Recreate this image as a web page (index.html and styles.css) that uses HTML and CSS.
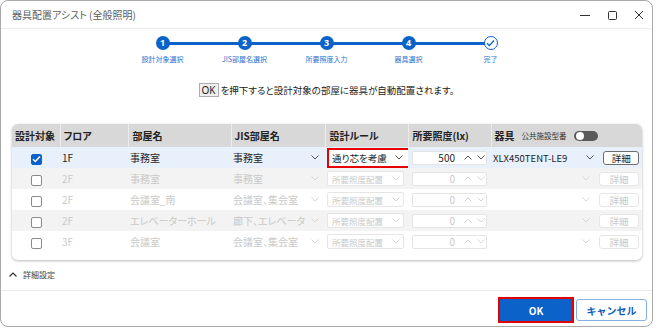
FILE: index.html
```html
<!DOCTYPE html>
<html lang="ja">
<head>
  <meta charset="UTF-8">
  <title>器具配置アシスト (全般照明)</title>
  <link rel="stylesheet" href="styles.css">
</head>
<body>

<div class="window">
  <div class="titlebar">
    <span class="title">器具配置アシスト (全般照明)</span>
    <div class="win-controls">
      <span class="win-btn"><svg width="10" height="10" viewBox="0 0 10 10"><path d="M0 5.5h10" stroke="#333" stroke-width="1"/></svg></span>
      <span class="win-btn"><svg width="10" height="10" viewBox="0 0 10 10"><rect x="1.5" y="1.5" width="8" height="8" rx="1" fill="none" stroke="#333"/></svg></span>
      <span class="win-btn"><svg width="10" height="10" viewBox="0 0 10 10"><path d="M1 1l8 8M9 1l-8 8" stroke="#333" stroke-width="1"/></svg></span>
    </div>
  </div>

  <div class="content">
    <div class="stepper">
      <div class="step-track">
        <span class="step-dot">1</span>
        <span class="step-dot">2</span>
        <span class="step-dot">3</span>
        <span class="step-dot">4</span>
        <span class="step-dot done"><svg width="9" height="8" viewBox="0 0 9 8"><path d="M1 4.2l2.4 2.4L8 1.5" fill="none" stroke="#0b62c9" stroke-width="1.4"/></svg></span>
      </div>
      <div class="step-labels">
        <span>設計対象選択</span>
        <span>JIS部屋名選択</span>
        <span>所要照度入力</span>
        <span>器具選択</span>
        <span>完了</span>
      </div>
    </div>

    <p class="notice"><span class="kbd">OK</span>を押下すると設計対象の部屋に器具が自動配置されます。</p>

    <div class="grid-card">
      <table class="rooms">
        <colgroup>
          <col style="width:48px"><col style="width:68px"><col style="width:103px"><col style="width:94px">
          <col style="width:83px"><col style="width:83px"><col>
        </colgroup>
        <thead>
          <tr>
            <th>設計対象</th>
            <th>フロア</th>
            <th class="pad">部屋名</th>
            <th>JIS部屋名</th>
            <th class="pad">設計ルール</th>
            <th class="pad">所要照度(lx)</th>
            <th>
              <div class="fixture-head">
                <span>器具</span>
                <span class="sub">公共施設型番</span>
                <span class="toggle"><span class="knob"></span></span>
              </div>
            </th>
          </tr>
        </thead>
        <tbody>
          <tr class="row-active">
            <td class="c-check"><span class="check on"><svg width="9" height="8" viewBox="0 0 9 8"><path d="M1 4.2l2.3 2.3L8 1.5" fill="none" stroke="#fff" stroke-width="1.5"/></svg></span></td>
            <td>1F</td>
            <td>事務室</td>
            <td><div class="dropdown"><span>事務室</span><svg class="chev" width="8" height="5" viewBox="0 0 8 5"><path d="M0.5 0.5L4 4L7.5 0.5" fill="none" stroke="currentColor"/></svg></div></td>
            <td><div class="select marked"><span>通り芯を考慮</span><svg class="chev" width="8" height="5" viewBox="0 0 8 5"><path d="M0.5 0.5L4 4L7.5 0.5" fill="none" stroke="currentColor"/></svg></div></td>
            <td><div class="spin"><span class="spin-val">500</span><svg class="chev" width="8" height="5" viewBox="0 0 8 5"><path d="M0.5 4.5L4 1L7.5 4.5" fill="none" stroke="currentColor"/></svg><svg class="chev" width="8" height="5" viewBox="0 0 8 5"><path d="M0.5 0.5L4 4L7.5 0.5" fill="none" stroke="currentColor"/></svg></div></td>
            <td><div class="fixture"><span class="fixture-name">XLX450TENT-LE9</span><svg class="chev" width="8" height="5" viewBox="0 0 8 5"><path d="M0.5 0.5L4 4L7.5 0.5" fill="none" stroke="currentColor"/></svg><span class="detail-btn">詳細</span></div></td>
          </tr>
          <tr class="row-off shade">
            <td class="c-check"><span class="check"></span></td>
            <td>2F</td>
            <td>事務室</td>
            <td><div class="dropdown"><span>事務室</span><svg class="chev" width="8" height="5" viewBox="0 0 8 5"><path d="M0.5 0.5L4 4L7.5 0.5" fill="none" stroke="currentColor"/></svg></div></td>
            <td><div class="select"><span>所要照度配置</span><svg class="chev" width="8" height="5" viewBox="0 0 8 5"><path d="M0.5 0.5L4 4L7.5 0.5" fill="none" stroke="currentColor"/></svg></div></td>
            <td><div class="spin"><span class="spin-val">0</span><svg class="chev" width="8" height="5" viewBox="0 0 8 5"><path d="M0.5 4.5L4 1L7.5 4.5" fill="none" stroke="currentColor"/></svg><svg class="chev" width="8" height="5" viewBox="0 0 8 5"><path d="M0.5 0.5L4 4L7.5 0.5" fill="none" stroke="currentColor"/></svg></div></td>
            <td><div class="fixture"><span class="fixture-name"></span><svg class="chev" width="8" height="5" viewBox="0 0 8 5"><path d="M0.5 0.5L4 4L7.5 0.5" fill="none" stroke="currentColor"/></svg><span class="detail-btn">詳細</span></div></td>
          </tr>
          <tr class="row-off">
            <td class="c-check"><span class="check"></span></td>
            <td>2F</td>
            <td>会議室_南</td>
            <td><div class="dropdown"><span>会議室、集会室</span><svg class="chev" width="8" height="5" viewBox="0 0 8 5"><path d="M0.5 0.5L4 4L7.5 0.5" fill="none" stroke="currentColor"/></svg></div></td>
            <td><div class="select"><span>所要照度配置</span><svg class="chev" width="8" height="5" viewBox="0 0 8 5"><path d="M0.5 0.5L4 4L7.5 0.5" fill="none" stroke="currentColor"/></svg></div></td>
            <td><div class="spin"><span class="spin-val">0</span><svg class="chev" width="8" height="5" viewBox="0 0 8 5"><path d="M0.5 4.5L4 1L7.5 4.5" fill="none" stroke="currentColor"/></svg><svg class="chev" width="8" height="5" viewBox="0 0 8 5"><path d="M0.5 0.5L4 4L7.5 0.5" fill="none" stroke="currentColor"/></svg></div></td>
            <td><div class="fixture"><span class="fixture-name"></span><svg class="chev" width="8" height="5" viewBox="0 0 8 5"><path d="M0.5 0.5L4 4L7.5 0.5" fill="none" stroke="currentColor"/></svg><span class="detail-btn">詳細</span></div></td>
          </tr>
          <tr class="row-off shade">
            <td class="c-check"><span class="check"></span></td>
            <td>2F</td>
            <td>エレベーターホール</td>
            <td><div class="dropdown"><span>廊下、エレベータ</span><svg class="chev" width="8" height="5" viewBox="0 0 8 5"><path d="M0.5 0.5L4 4L7.5 0.5" fill="none" stroke="currentColor"/></svg></div></td>
            <td><div class="select"><span>所要照度配置</span><svg class="chev" width="8" height="5" viewBox="0 0 8 5"><path d="M0.5 0.5L4 4L7.5 0.5" fill="none" stroke="currentColor"/></svg></div></td>
            <td><div class="spin"><span class="spin-val">0</span><svg class="chev" width="8" height="5" viewBox="0 0 8 5"><path d="M0.5 4.5L4 1L7.5 4.5" fill="none" stroke="currentColor"/></svg><svg class="chev" width="8" height="5" viewBox="0 0 8 5"><path d="M0.5 0.5L4 4L7.5 0.5" fill="none" stroke="currentColor"/></svg></div></td>
            <td><div class="fixture"><span class="fixture-name"></span><svg class="chev" width="8" height="5" viewBox="0 0 8 5"><path d="M0.5 0.5L4 4L7.5 0.5" fill="none" stroke="currentColor"/></svg><span class="detail-btn">詳細</span></div></td>
          </tr>
          <tr class="row-off">
            <td class="c-check"><span class="check"></span></td>
            <td>3F</td>
            <td>会議室</td>
            <td><div class="dropdown"><span>会議室、集会室</span><svg class="chev" width="8" height="5" viewBox="0 0 8 5"><path d="M0.5 0.5L4 4L7.5 0.5" fill="none" stroke="currentColor"/></svg></div></td>
            <td><div class="select"><span>所要照度配置</span><svg class="chev" width="8" height="5" viewBox="0 0 8 5"><path d="M0.5 0.5L4 4L7.5 0.5" fill="none" stroke="currentColor"/></svg></div></td>
            <td><div class="spin"><span class="spin-val">0</span><svg class="chev" width="8" height="5" viewBox="0 0 8 5"><path d="M0.5 4.5L4 1L7.5 4.5" fill="none" stroke="currentColor"/></svg><svg class="chev" width="8" height="5" viewBox="0 0 8 5"><path d="M0.5 0.5L4 4L7.5 0.5" fill="none" stroke="currentColor"/></svg></div></td>
            <td><div class="fixture"><span class="fixture-name"></span><svg class="chev" width="8" height="5" viewBox="0 0 8 5"><path d="M0.5 0.5L4 4L7.5 0.5" fill="none" stroke="currentColor"/></svg><span class="detail-btn">詳細</span></div></td>
          </tr>
        </tbody>
      </table>
    </div>

    <div class="advanced">
      <svg width="8" height="5" viewBox="0 0 8 5"><path d="M0.5 4.5L4 1L7.5 4.5" fill="none" stroke="#333" stroke-width="1.2"/></svg>
      <span>詳細設定</span>
    </div>
  </div>

  <div class="footer">
    <button class="btn btn-primary">OK</button>
    <button class="btn btn-secondary">キャンセル</button>
  </div>
</div>

</body>
</html>
```

FILE: styles.css
```css
body {
  margin: 0;
  background: #fff;
  font-family: "Noto Sans CJK JP", "Noto Sans", sans-serif;
  font-feature-settings: "palt";
  color: #1e1e1e;
}
.window {
  width: 653px;
  height: 327px;
  box-sizing: border-box;
  border: 1px solid #a9a9a9;
  border-radius: 8px;
  background: #fff;
  display: flex;
  flex-direction: column;
  overflow: hidden;
}

/* title bar */
.titlebar {
  height: 28px;
  flex: none;
  display: flex;
  align-items: center;
  padding-left: 11px;
  border-bottom: 1px solid #ececec;
  box-sizing: border-box;
}
.title {
  font-size: 10px;
  color: #5c5c5c;
}
.win-controls {
  margin-left: auto;
  display: flex;
}
.win-btn {
  width: 27px;
  height: 28px;
  display: flex;
  align-items: center;
  justify-content: center;
}

.content {
  flex: 1;
  display: flex;
  flex-direction: column;
}

/* stepper */
.stepper {
  padding-top: 7px;
}
.step-track, .step-labels {
  width: 410px;
  margin: 0 auto;
  display: grid;
  grid-template-columns: repeat(5, 82px);
  justify-items: center;
}
.step-track {
  height: 14px;
  background: linear-gradient(#0b62c9, #0b62c9) no-repeat 41px 50% / 328px 3px;
}
.step-dot {
  width: 14px;
  height: 14px;
  border-radius: 50%;
  background: #0b62c9;
  color: #fff;
  font-size: 9px;
  font-weight: bold;
  line-height: 14px;
  text-align: center;
  font-family: "Noto Sans", sans-serif;
}
.step-dot.done {
  box-sizing: border-box;
  background: #fff;
  border: 1.5px solid #0b62c9;
  display: flex;
  align-items: center;
  justify-content: center;
}
.step-labels {
  margin-top: 4px;
  font-size: 7px;
  line-height: 10px;
  color: #2a72cf;
}

/* notice */
.notice {
  margin: 19px 0 0 0;
  display: flex;
  justify-content: center;
  align-items: center;
  gap: 2px;
  font-size: 9.5px;
  line-height: 14px;
  color: #222;
}
.kbd {
  box-sizing: border-box;
  height: 14px;
  padding: 0 2px;
  border: 1px solid #adadad;
  background: #efefef;
  font-size: 10px;
  line-height: 12px;
  font-family: "Noto Sans", sans-serif;
}

/* table */
.grid-card {
  margin: 27px 10px 0 11px;
  padding-bottom: 8px;
  background: #fff;
  border-radius: 6px;
  overflow: hidden;
  box-shadow: 0 1px 3px rgba(0, 0, 0, 0.28);
}
.rooms {
  width: 100%;
  border-collapse: collapse;
  table-layout: fixed;
  font-size: 10px;
}
.rooms th {
  height: 23px;
  padding: 0 3px;
  background: #d8d8d8;
  text-align: left;
  font-weight: bold;
  color: #222;
  white-space: nowrap;
}
.rooms th + th {
  border-left: 1px solid #ececec;
}
.rooms th.pad {
  padding-left: 4px;
}
.rooms td {
  height: 21px;
  padding: 0 2px;
  white-space: nowrap;
  overflow: hidden;
}
.row-active td {
  background: #e8f0fb;
}
.shade td {
  background: #f3f3f3;
}
.row-off td {
  color: #c9c9c9;
}
.c-check {
  text-align: center;
}

.check {
  display: inline-flex;
  align-items: center;
  justify-content: center;
  box-sizing: border-box;
  width: 11px;
  height: 11px;
  border: 1px solid #8a8a8a;
  border-radius: 2px;
  background: #fff;
  vertical-align: middle;
}
.check.on {
  background: #0b62c9;
  border-color: #0b62c9;
}

.chev {
  flex: none;
  color: #555;
}
.row-off .chev {
  color: #d6d6d6;
}
.dropdown {
  display: flex;
  align-items: center;
  padding-right: 4px;
}
.dropdown span {
  flex: 1;
}
.select {
  box-sizing: border-box;
  width: 77px;
  height: 15px;
  display: flex;
  align-items: center;
  padding: 0 3px 0 4px;
  border: 1px solid #e6e6e6;
  border-radius: 2px;
  background: #fff;
  font-size: 8.5px;
}
.select span {
  flex: 1;
  overflow: hidden;
}
.select.marked {
  width: 83px;
  height: 20px;
  padding: 0 5px 0 3px;
  border: 2px solid #e60000;
  border-radius: 0;
  color: #1e1e1e;
  font-size: 9.5px;
}
.spin {
  box-sizing: border-box;
  width: 75px;
  height: 14px;
  margin-left: 2px;
  display: flex;
  align-items: center;
  gap: 5px;
  padding-right: 1px;
  border: 1px solid #e4e4e4;
  border-radius: 2px;
  background: #fff;
}
.spin-val {
  flex: 1;
  text-align: right;
  padding-right: 4px;
}
.fixture {
  display: flex;
  align-items: center;
  gap: 9px;
  padding-right: 1px;
}
.fixture-name {
  flex: 1;
  margin-right: 10px;
  font-size: 9.5px;
}
.detail-btn {
  box-sizing: border-box;
  width: 40px;
  height: 14px;
  border: 1px solid #6e6e6e;
  border-radius: 3px;
  background: #fff;
  text-align: center;
  line-height: 12px;
  font-size: 9.5px;
}
.row-off .detail-btn {
  border-color: #e6e6e6;
}

.fixture-head {
  display: flex;
  align-items: center;
}
.fixture-head .sub {
  margin-left: 7px;
  font-size: 7.5px;
  font-weight: normal;
  color: #333;
}
.toggle {
  margin-left: 7px;
  width: 24px;
  height: 10px;
  border-radius: 5px;
  background: #5a5a5a;
  display: flex;
  align-items: center;
  padding-left: 2px;
  box-sizing: border-box;
}
.knob {
  width: 8px;
  height: 8px;
  border-radius: 50%;
  background: #fff;
}

/* advanced settings */
.advanced {
  height: 29px;
  display: flex;
  align-items: center;
  gap: 6px;
  padding-left: 8px;
  font-size: 8px;
  color: #444;
}

/* footer */
.footer {
  flex: none;
  display: flex;
  justify-content: flex-end;
  gap: 4px;
  padding: 8px 5px 5px 0;
  border-top: 1px solid #e9e9e9;
}
.btn {
  height: 22px;
  width: 71px;
  border-radius: 3px;
  font-family: "Noto Sans CJK JP", "Noto Sans", sans-serif;
  font-size: 10px;
  font-weight: bold;
  cursor: pointer;
}
.btn-primary {
  width: 72px;
  background: #0b62c9;
  color: #fff;
  border: none;
  border-radius: 0;
  outline: 2px solid #e60000;
}
.btn-secondary {
  background: #fff;
  color: #0b5cc0;
  border: 1px solid #86afe6;
}
```
